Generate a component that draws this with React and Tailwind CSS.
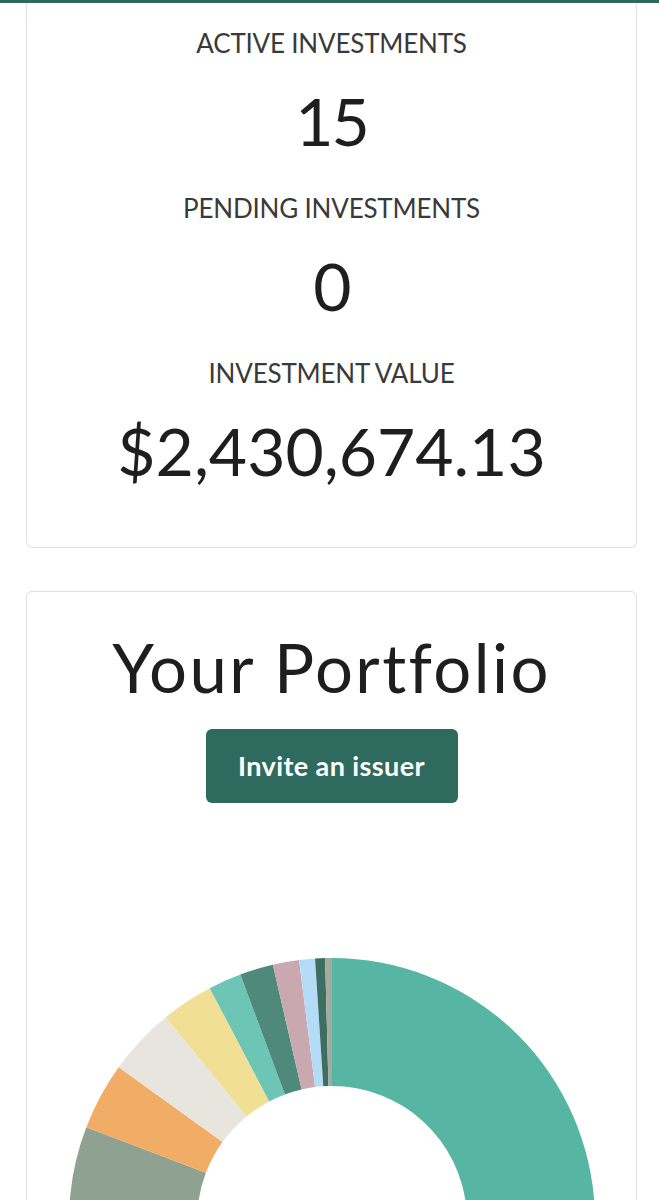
import React from "react";

const CX = 263;
const CY = 263;
const R = 263;
const RI = 135;

function pt(angle, rad) {
  const a = ((angle - 90) * Math.PI) / 180;
  return [CX + rad * Math.cos(a), CY + rad * Math.sin(a)];
}

function slicePath(a0, a1) {
  const large = a1 - a0 > 180 ? 1 : 0;
  const [x0, y0] = pt(a0, R);
  const [x1, y1] = pt(a1, R);
  const [x2, y2] = pt(a1, RI);
  const [x3, y3] = pt(a0, RI);
  return `M${x0} ${y0} A${R} ${R} 0 ${large} 1 ${x1} ${y1} L${x2} ${y2} A${RI} ${RI} 0 ${large} 0 ${x3} ${y3} Z`;
}

const slices = [
  [0, 170, "#56b6a3"],
  [170, 200, "#c7d3cd"],
  [200, 230, "#e3c2a0"],
  [230, 290.9, "#8fa292"],
  [290.9, 305.8, "#f1ad66"],
  [305.8, 320.8, "#e8e5de"],
  [320.8, 332.3, "#f1df95"],
  [332.3, 339.6, "#6dc5b5"],
  [339.6, 347, "#4f897c"],
  [347, 352.8, "#c9a8af"],
  [352.8, 356.3, "#b5dcf6"],
  [356.3, 358.5, "#3d6e61"],
  [358.5, 360, "#a3ab9f"],
];

function Donut() {
  return (
    <svg width="526" height="526" viewBox="0 0 526 526" className="block">
      {slices.map(([a0, a1, c], i) => (
        <path key={i} d={slicePath(a0, a1)} fill={c} />
      ))}
    </svg>
  );
}

function Stat({ label, value, first, big }) {
  return (
    <>
      <div
        className={`${first ? "" : "mt-[38px]"} text-[26px] leading-[32px] text-[#3a3a3a] tracking-[-0.2px]`}
      >
        {label}
      </div>
      <div
        className={`mt-[29px] text-[66px] leading-[66px] text-[#1e1e1e] ${big ? "tracking-[0px]" : "tracking-[-2px]"}`}
      >
        {value}
      </div>
    </>
  );
}

export default function App() {
  return (
    <div
      className="w-[659px] h-[1200px] overflow-hidden bg-white"
      style={{ fontFamily: "Lato, 'Open Sans', sans-serif" }}
    >
      <div className="h-[3px] bg-[#2e6b5e]" />
      <div className="ml-[26px] w-[611px] border-x border-b border-[#e0e0e0] rounded-b-md flex flex-col items-center pt-[24px] pb-[63px]">
        <Stat first label="ACTIVE INVESTMENTS" value="15" />
        <Stat label="PENDING INVESTMENTS" value="0" />
        <Stat big label="INVESTMENT VALUE" value="$2,430,674.13" />
      </div>
      <div className="ml-[26px] mt-[43px] w-[611px] border border-[#e0e0e0] rounded-md flex flex-col items-center pt-[42px] pb-[40px]">
        <h1 className="text-[67px] leading-[67px] text-[#1e1e1e] tracking-[2.4px]">
          Your Portfolio
        </h1>
        <button className="mt-[28px] w-[252px] h-[74px] rounded-md bg-[#2e6b5e] text-white font-bold text-[27px] tracking-[0.4px]">
          Invite an issuer
        </button>
        <div className="mt-[155px]">
          <Donut />
        </div>
      </div>
    </div>
  );
}
